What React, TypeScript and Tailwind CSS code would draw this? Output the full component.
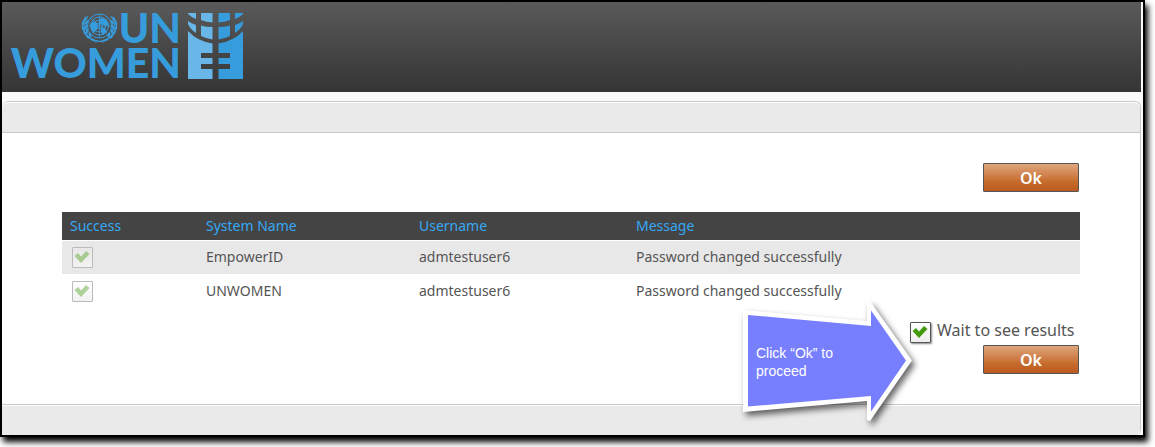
const RESULTS = [
  { system: 'EmpowerID', username: 'admtestuser6', message: 'Password changed successfully' },
  { system: 'UNWOMEN', username: 'admtestuser6', message: 'Password changed successfully' },
];

// leaves of the left laurel branch: x, y, rotation
const LEAVES = [
  [85, 19, 30],
  [83, 23, 10],
  [83, 28, -10],
  [85, 33, -35],
  [88, 37, -55],
  [93, 40, -70],
  [87, 22, 40],
  [86, 27, 20],
  [87, 31, 0],
  [90, 35, -25],
];

function LaurelBranch() {
  return (
    <g>
      <path d="M88 16 Q80 28 88 36 Q93 41 104 42" fill="none" stroke="#379cdc" strokeWidth="1" />
      {LEAVES.map(([x, y, angle]) => (
        <ellipse
          key={`${x}-${y}`}
          cx={x}
          cy={y}
          rx="1.1"
          ry="2.8"
          transform={`rotate(${angle} ${x} ${y})`}
        />
      ))}
    </g>
  );
}

function Emblem() {
  return (
    <g fill="#379cdc">
      <LaurelBranch />
      <g transform="translate(199 0) scale(-1 1)">
        <LaurelBranch />
      </g>
      <g fill="none" stroke="#379cdc" strokeWidth="1">
        <circle cx="99.5" cy="26" r="12" />
        <circle cx="99.5" cy="26" r="9" />
        <circle cx="99.5" cy="26" r="6" />
        <circle cx="99.5" cy="26" r="3" />
        <path d="M99.5 14V38M87.5 26H111.5M91 17.5L108 34.5M108 17.5L91 34.5" strokeWidth="0.7" />
      </g>
      <path d="M90 24l4-3 3 2 1 4-2 4-3 2-2-4zM99 19l4-1 4 3 2 4-4 1-3-2-3 1zM101 27l4 1 2 4-4 3-2-3z" />
    </g>
  );
}

function SymbolHalf() {
  return (
    <>
      <path d="M188 13H196V19Q191 17 188 14Z" />
      <path d="M201 13H212.5V22.5Q206 22 201 20Z" />
      <path d="M188 21Q191 23.5 196 25V33Q190 29 188 24Z" />
      <path d="M201 25.5Q206 27 212.5 27V39.5Q206 38.5 201 36Z" />
      <path d="M188 31Q197 41 212.5 43.5V53H201V58H212.5V64H201V69H212.5V79H188Z" />
    </>
  );
}

function Logo() {
  return (
    <svg viewBox="12 12 232 68" className="h-[68px] w-[232px] overflow-visible" role="img" aria-label="UN Women">
      <Emblem />
      <g fill="#379cdc" fontFamily="Lato, sans-serif" fontWeight="900" fontSize="41" textAnchor="end">
        <text x="181" y="43">UN</text>
        <text x="181" y="78">WOMEN</text>
      </g>
      <g fill="#69b7e8">
        <SymbolHalf />
      </g>
      <g fill="#379cdc" transform="translate(431 0) scale(-1 1)">
        <SymbolHalf />
      </g>
    </svg>
  );
}

function CheckBox({ id, label, disabled }: { id: string; label?: string; disabled?: boolean }) {
  return (
    <span className="relative block size-[21px] shrink-0">
      <input
        id={id}
        type="checkbox"
        defaultChecked
        disabled={disabled}
        aria-label={label}
        className="block size-[21px] appearance-none rounded-[1px] border border-[#555] bg-linear-to-b from-white to-[#eee] shadow-[1px_1px_2px_#888] disabled:border-[#bbb] disabled:from-transparent disabled:to-[#f2f2f2] disabled:shadow-none"
      />
      <svg
        viewBox="0 0 21 21"
        className={`pointer-events-none absolute inset-0 ${disabled ? 'opacity-40' : ''}`}
      >
        <path d="M2.5 9L6 6L9 9.5L14 4L17.5 7L9 16Z" fill="#429a0c" />
      </svg>
    </span>
  );
}

function OkButton() {
  return (
    <button
      type="button"
      className="mr-px block h-[29px] w-24 rounded-[1px] border border-[#555] bg-linear-to-b from-[#dfa67c] via-[#c66c2b] via-65% to-[#bb5922] text-base leading-6 font-semibold text-white"
    >
      Ok
    </button>
  );
}

function Callout() {
  return (
    <div className="pointer-events-none absolute top-[-20px] right-[168px] h-[124px] w-[170px]">
      <svg
        viewBox="0 0 170 124"
        className="absolute inset-0 overflow-visible drop-shadow-[3px_4px_3px_rgba(0,0,0,0.6)]"
      >
        <path d="M1 10L125 21V2L128 1L170 60.5L128 121L125 120V101L1 112Z" fill="white" />
        <path d="M6 15L129 26V10.5L164 60.5L129 111.5V96L6 106.5Z" fill="#787fff" />
      </svg>
      <p className="relative w-28 pt-11 pl-[14px] font-['Liberation_Sans',sans-serif] text-sm leading-[18px] text-white">
        Click “Ok” to proceed
      </p>
    </div>
  );
}

export default function App() {
  return (
    <div className="bg-white pr-[10px] pb-[10px] font-['Noto_Sans',sans-serif] text-[#555]">
      <div className="border-2 border-black bg-[#fafafa] pr-[2px] shadow-[3px_5px_6px_#000]">
        <header className="bg-linear-to-b from-[#5a5a5a] to-[#353535] px-[10px] pt-[10px] pb-3">
          <Logo />
        </header>

        <main className="mt-[9px] rounded-t-md rounded-br-md border-t border-r border-[#c8c8c8] bg-white">
          <div className="h-[31px] rounded-t-md border-t border-b border-t-white border-b-[#c8c8c8] bg-[#eaeaea]" />

          <div className="px-[60px] py-[30px]">
            <div className="flex justify-end">
              <OkButton />
            </div>

            <table className="mt-5 w-full table-fixed border-collapse text-left text-sm leading-5">
              <thead className="bg-[#444] text-[#34a8f4]">
                <tr className="h-7 border-b border-white">
                  <th className="w-[136px] px-2 font-normal">Success</th>
                  <th className="w-[213px] px-2 font-normal">System Name</th>
                  <th className="w-[217px] px-2 font-normal">Username</th>
                  <th className="px-2 font-normal">Message</th>
                </tr>
              </thead>
              <tbody>
                {RESULTS.map(row => (
                  <tr key={row.system} className="h-[34px] odd:bg-[#e8e8e8]">
                    <td className="px-[10px]">
                      <CheckBox id={`success-${row.system}`} label={`${row.system} success`} disabled />
                    </td>
                    <td className="px-2">{row.system}</td>
                    <td className="px-2">{row.username}</td>
                    <td className="px-2">{row.message}</td>
                  </tr>
                ))}
              </tbody>
            </table>

            <div className="relative mt-3 flex flex-col items-end">
              <div className="flex h-[25px] items-start gap-[6px]">
                <div className="pt-[2px]">
                  <CheckBox id="wait-results" />
                </div>
                <label htmlFor="wait-results" className="w-[143px] text-base leading-5">
                  Wait to see results
                </label>
              </div>
              <OkButton />
              <Callout />
            </div>
          </div>

          <footer className="h-[31px] rounded-br-md border-t border-[#c8c8c8] bg-[#eaeaea] shadow-[inset_0_1px_white]" />
        </main>
      </div>
    </div>
  );
}
